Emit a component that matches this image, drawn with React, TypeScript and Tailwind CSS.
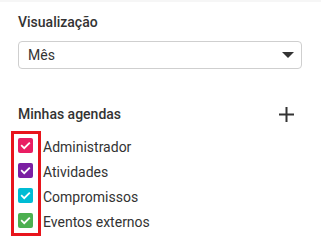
import React from "react";

const agendas = [
  { name: "Administrador", color: "bg-[#e91e63]" },
  { name: "Atividades", color: "bg-[#7b1fa2]" },
  { name: "Compromissos", color: "bg-[#00bcd4]" },
  { name: "Eventos externos", color: "bg-[#4caf50]" },
];

function CheckBox({ color }: { color: string }) {
  return (
    <span className={`flex h-[15px] w-[15px] items-center justify-center rounded-[2px] ${color}`}>
      <svg width="11" height="11" viewBox="0 0 12 12" fill="none">
        <path d="M2 6.3l2.6 2.6L10 3.5" stroke="white" strokeWidth="2" strokeLinecap="square" />
      </svg>
    </span>
  );
}

export default function App() {
  return (
    <div
      className="h-[247px] w-[321px] overflow-hidden border-t-2 border-[#f6f6f6] bg-white text-[#333]"
      style={{ fontFamily: "Roboto, 'Liberation Sans', sans-serif" }}
    >
      <div className="pl-[18px] pr-[19px] pt-[10px]">
        <h2 className="text-[14px] leading-[20px] font-medium text-[#333]">Visualização</h2>

        <div className="mt-[9px] flex h-[28px] items-center justify-between rounded-[4px] border border-[#cfcfcf] pl-[9px] pr-[7px]">
          <span className="text-[14px] leading-[20px] text-[#333]">Mês</span>
          <svg width="12" height="6" viewBox="0 0 12 6">
            <polygon points="0,0 12,0 6,6" fill="#333" />
          </svg>
        </div>

        <div className="mt-[35px] flex items-center justify-between">
          <h2 className="text-[14px] leading-[20px] font-medium text-[#333]">Minhas agendas</h2>
          <svg width="15" height="15" viewBox="0 0 15 15" className="mr-[8px]">
            <path d="M7.5 0v15M0 7.5h15" stroke="#333" strokeWidth="2" />
          </svg>
        </div>

        <div className="relative mt-[7px]">
          <ul className="flex flex-col pt-[7px]">
            {agendas.map((a) => (
              <li key={a.name} className="flex h-[25px] items-start gap-[10px]">
                <CheckBox color={a.color} />
                <span className="-mt-[1px] text-[14px] leading-[20px] text-[#333]">{a.name}</span>
              </li>
            ))}
          </ul>
          <div className="pointer-events-none absolute -left-[7px] top-0 h-[105px] w-[30px] border-[3px] border-[#e8141c]" />
        </div>
      </div>
    </div>
  );
}
